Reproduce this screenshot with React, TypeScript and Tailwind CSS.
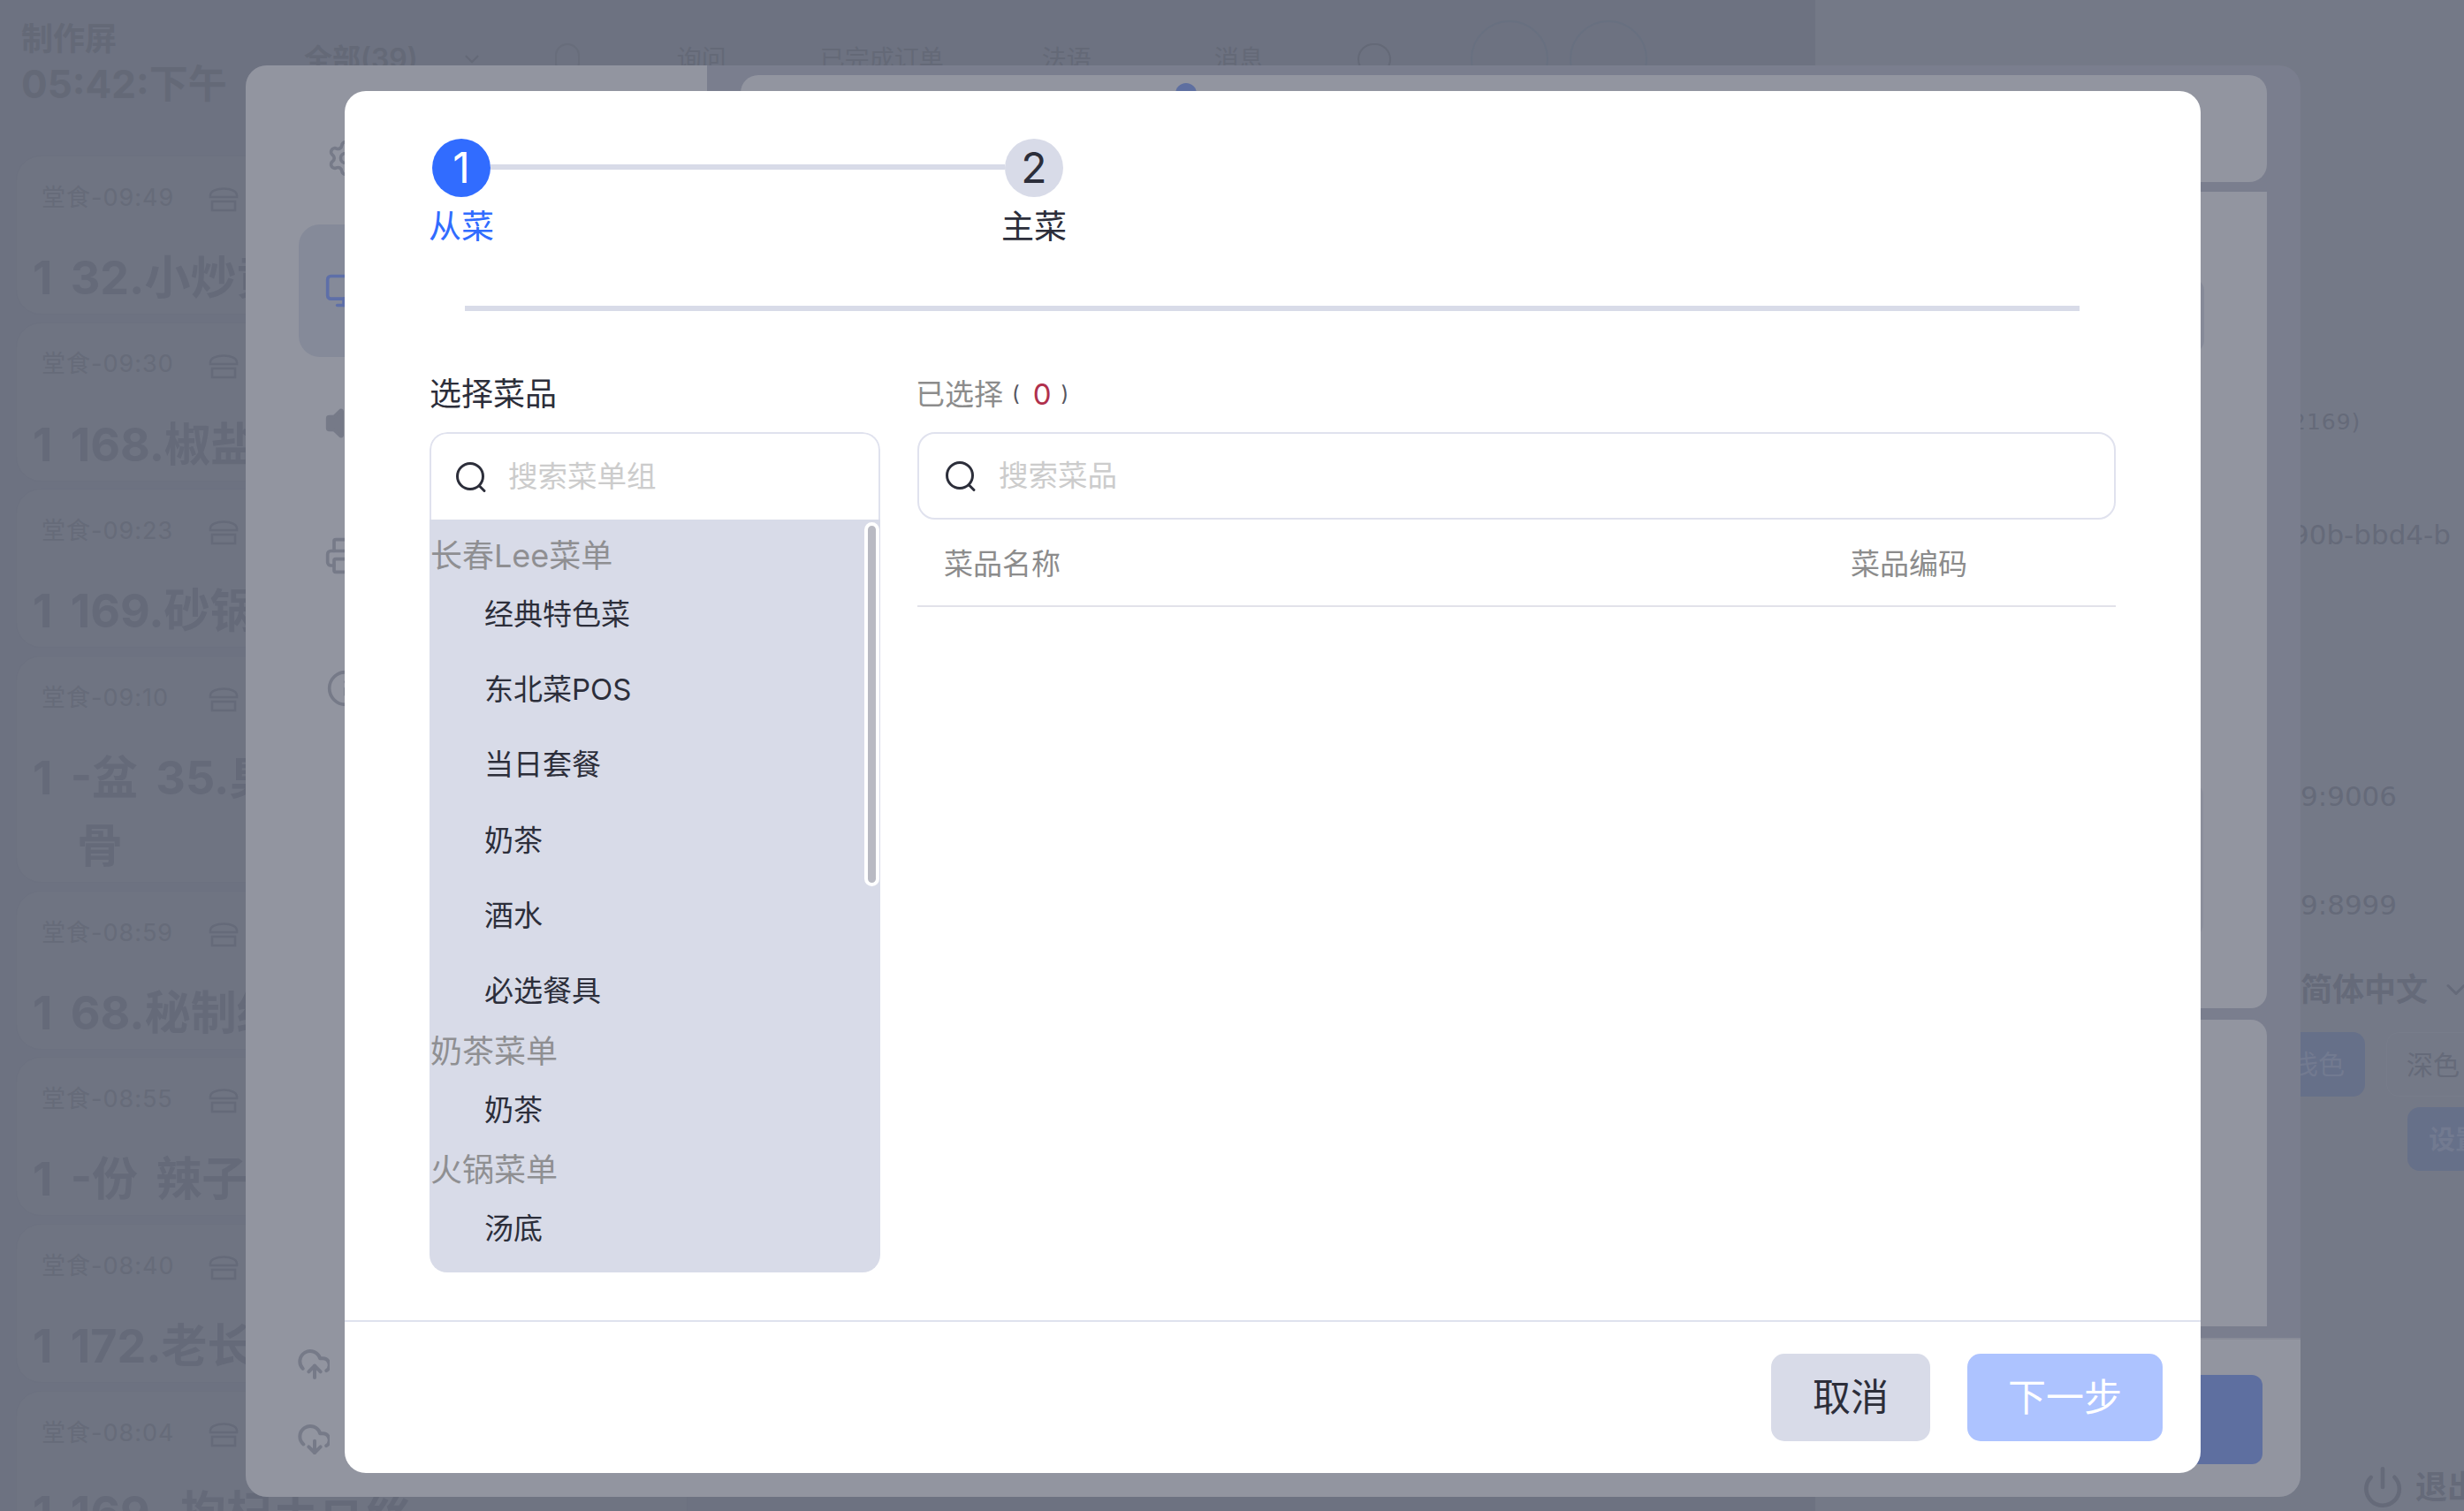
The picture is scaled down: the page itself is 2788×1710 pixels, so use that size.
import { ChevronDown, CloudDownload, CloudUpload, Info, Monitor, Power, Printer, Settings, Volume } from "lucide-react";

const orders = [
  { time: "堂食-09:49", title: ["1 32.小炒黄牛肉"] },
  { time: "堂食-09:30", title: ["1 168.椒盐排条"] },
  { time: "堂食-09:23", title: ["1 169.砂锅豆腐"] },
  { time: "堂食-09:10", title: ["1 -盆 35.臭鳜鱼排", "骨"] },
  { time: "堂食-08:59", title: ["1 68.秘制红烧肉"] },
  { time: "堂食-08:55", title: ["1 -份 辣子鸡丁"] },
  { time: "堂食-08:40", title: ["1 172.老长春酱骨"] },
  { time: "堂食-08:04", title: ["1 169. 拘杞土豆丝"] },
];

const menuGroups = [
  { name: "长春Lee菜单", items: ["经典特色菜", "东北菜POS", "当日套餐", "奶茶", "酒水", "必选餐具"] },
  { name: "奶茶菜单", items: ["奶茶"] },
  { name: "火锅菜单", items: ["汤底"] },
];

function SearchGlyph() {
  return (
    <svg width="36" height="36" viewBox="0 0 36 36" fill="none" stroke="#2c2e3a" strokeWidth="3" strokeLinecap="round" className="shrink-0">
      <circle cx="17" cy="17" r="14.5" />
      <path d="M27.5 28 L33 33.5" />
    </svg>
  );
}

function BoxGlyph() {
  return (
    <svg width="36" height="36" viewBox="0 0 36 36" fill="none" stroke="#656a79" strokeWidth="2.5" className="shrink-0">
      <path d="M3 15 C3 5 33 5 33 15 L33 17 L3 17 Z" />
      <path d="M5 22 H31 V32 H5 Z" />
    </svg>
  );
}

function Backdrop() {
  return (
    <div className="flex h-full">
      <div className="w-[2054px] shrink-0">
        <div className="flex h-[176px] items-start">
          <div className="w-[287px] shrink-0 pl-[24px] font-bold text-[#646977]">
            <div className="pt-[20px] text-[36px] leading-[48px]">制作屏</div>
            <div className="text-[44px] leading-[54px]">05:42:下午</div>
          </div>
          <div className="mt-[47px] flex h-[40px] items-center text-[28px] leading-[40px] whitespace-nowrap text-[#646977]">
            <span className="ml-[57px] text-[32px] font-semibold">全部(39)</span>
            <ChevronDown size={26} className="ml-[48px] shrink-0" />
            <span className="ml-[81px] h-[36px] w-[28px] shrink-0 rounded-full border-2 border-[#686d7b]" />
            <span className="ml-[110px]">询问</span>
            <span className="ml-[106px]">已完成订单</span>
            <span className="ml-[111px]">法语</span>
            <span className="ml-[139px]">消息</span>
            <span className="ml-[106px] h-[36px] w-[38px] shrink-0 rounded-full border-2 border-[#646977]" />
            <span className="ml-[90px] h-[88px] w-[88px] shrink-0 rounded-full border-2 border-[#687080]" />
            <span className="ml-[24px] h-[88px] w-[88px] shrink-0 rounded-full border-2 border-[#687080]" />
          </div>
        </div>
        <div className="ml-[18px] flex w-[760px] flex-col gap-[8.7px]">
          {orders.map((order) => (
            <div key={order.time} className="rounded-[28px] border border-[#6c7180] bg-[#6f7482] px-[18px] pt-[24px] pb-[2px]">
              <div className="flex h-[46px] items-center">
                <span className="w-[198px] pl-[10px] text-[27px] tracking-[1px] whitespace-nowrap text-[#666b79]">{order.time}</span>
                <BoxGlyph />
              </div>
              <div className="mt-[29px] text-[52px] leading-[77px] font-bold whitespace-nowrap text-[#656a79] [word-spacing:8px]">
                {order.title.map((line, i) => (
                  <div key={line} className={i > 0 ? "pl-[50px]" : ""}>
                    {line}
                  </div>
                ))}
              </div>
            </div>
          ))}
        </div>
      </div>

      <div className="flex h-full flex-1 flex-col overflow-hidden bg-[#747987] pl-[549px] text-[#656a79]">
        <div className="mt-[453px] -ml-[10px] h-[50px] text-[25px] leading-[50px] tracking-[1px] whitespace-nowrap" style={{ fontFamily: "'DejaVu Sans', sans-serif" }}>
          2169)
        </div>
        <div className="mt-[77px] -ml-[10px] h-[50px] text-[31px] leading-[50px] whitespace-nowrap" style={{ fontFamily: "'DejaVu Sans', sans-serif" }}>
          90b-bbd4-b
        </div>
        <div className="mt-[246px] h-[50px] text-[31px] leading-[50px]" style={{ fontFamily: "'DejaVu Sans', sans-serif" }}>
          9:9006
        </div>
        <div className="mt-[73px] h-[50px] text-[31px] leading-[50px]" style={{ fontFamily: "'DejaVu Sans', sans-serif" }}>
          9:8999
        </div>
        <div className="mt-[46px] flex h-[50px] items-center text-[36px] font-bold whitespace-nowrap">
          简体中文
          <ChevronDown size={36} className="ml-[14px] shrink-0" />
        </div>
        <div className="mt-[23px] flex text-[30px] leading-[73px]">
          <span className="-ml-[33px] h-[73px] w-[106px] shrink-0 rounded-[14px] bg-[#667089] text-center text-[#727a90]">浅色</span>
          <span className="ml-[24px] h-[73px] w-[106px] shrink-0 rounded-[14px] border border-[#777c8a] text-center">深色</span>
        </div>
        <span className="mt-[12px] ml-[121px] h-[72px] w-[106px] shrink-0 rounded-[14px] bg-[#667089] pl-[24px] text-[30px] leading-[72px] font-semibold whitespace-nowrap text-[#727a90]">
          设置
        </span>
        <div className="mt-auto ml-[68px] flex h-[54px] shrink-0 items-center text-[36px] font-bold whitespace-nowrap">
          <Power size={50} strokeWidth={2.2} className="shrink-0" />
          <span className="ml-[12px]">退出</span>
        </div>
      </div>
    </div>
  );
}

function SettingsDialog() {
  return (
    <div className="absolute top-[74px] left-[278px] flex h-[1620px] w-[2325px] overflow-hidden rounded-[24px] bg-[#7a7e8e]">
      <div className="flex w-[522px] shrink-0 flex-col bg-[#9295a0] pt-[30px] text-[#767a88]">
        <div className="flex h-[150px] items-center pl-[91px]">
          <Settings size={44} />
        </div>
        <div className="ml-[60px] flex h-[150px] w-[400px] items-center rounded-[24px] bg-[#858a99] pl-[29px] text-[#5e6fa8]">
          <Monitor size={44} />
        </div>
        <div className="flex h-[150px] items-center pl-[89px]">
          <Volume size={44} fill="currentColor" />
        </div>
        <div className="flex h-[150px] items-center pl-[89px]">
          <Printer size={44} />
        </div>
        <div className="flex h-[150px] items-center pl-[91px]">
          <Info size={44} />
        </div>
        <div className="mt-auto mb-[45px] ml-[59px] flex flex-col gap-[45px]">
          <div className="h-[40px] w-[36px] overflow-hidden">
            <CloudUpload size={40} strokeWidth={2.4} className="-ml-[1px]" />
          </div>
          <div className="h-[40px] w-[36px] overflow-hidden">
            <CloudDownload size={40} strokeWidth={2.4} className="-ml-[1px]" />
          </div>
        </div>
      </div>
      <div className="flex flex-1 flex-col">
        <div className="flex-1 px-[38px] pt-[11px]">
          <div className="h-[121px] rounded-[20px] bg-[#9295a0] pt-[9px] pl-[492px]">
            <div className="size-[24px] rounded-full bg-[#5e6fa0]" />
          </div>
          <div className="mt-[11px] flex h-[924px] flex-col rounded-b-[18px] bg-[#9295a0] pt-[98px]">
            <div className="mr-[71px] ml-auto h-[84px] w-[300px] rounded-[14px] bg-[#868a98]" />
            <div className="mt-[487px] mr-[72px] ml-auto h-[174px] w-[300px] rounded-[14px] bg-[#8b8e9b]" />
          </div>
          <div className="mt-[13px] h-[347px] rounded-t-[18px] bg-[#9295a0]" />
        </div>
        <div className="mt-[12px] flex h-[180px] justify-end border-t-2 border-[#898c98] bg-[#9295a0] pt-[40px] pr-[43px]">
          <div className="h-[101px] w-[400px] rounded-[12px] bg-[#5e6fa0]" />
        </div>
      </div>
    </div>
  );
}

function DishPanel() {
  return (
    <div className="w-[510px] shrink-0">
      <div className="text-[36px] leading-[44px] text-[#2c2e3a]">选择菜品</div>
      <div className="mt-[21px] h-[951px] overflow-hidden rounded-[20px]">
        <div className="flex h-[99px] items-center gap-[24px] rounded-t-[20px] border-x-2 border-t-2 border-[#e0e2ee] pl-[27px] text-[33.5px] text-[#cccccc]">
          <SearchGlyph />
          搜索菜单组
        </div>
        <div className="relative h-[852px] bg-[#d8dbe8] pt-[15.5px]">
          {menuGroups.map((group) => (
            <div key={group.name}>
              <div className="h-[49px] pl-[1px] text-[36px] leading-[50px] text-[#8f8f92]">{group.name}</div>
              {group.items.map((item) => (
                <div key={item} className="h-[85.4px] pl-[62px] text-[33px] leading-[85px] text-[#2c2e3a]">
                  {item}
                </div>
              ))}
            </div>
          ))}
          <div className="absolute top-[3px] right-[1px] h-[412px] w-[17px] rounded-full border-[4px] border-white bg-[#b9bac3]" />
        </div>
      </div>
    </div>
  );
}

function SelectedPanel() {
  return (
    <div className="flex-1">
      <div className="-ml-[2px] flex items-center text-[33px] leading-[44px] text-[#8c8c8c]">
        已选择
        <span className="ml-[10px] text-[24px] text-[#55565f]">(</span>
        <span className="ml-[15px] text-[#b0304c]">0</span>
        <span className="ml-[11px] text-[24px] text-[#55565f]">)</span>
      </div>
      <div className="mt-[21px] flex h-[99px] items-center gap-[25px] rounded-[20px] border-2 border-[#e0e2ee] pl-[29px] text-[33.5px] text-[#cccccc]">
        <SearchGlyph />
        搜索菜品
      </div>
      <div className="flex h-[99px] items-center border-b-2 border-[#e2e2ea] pt-[4px] text-[33px] text-[#8c8c8c]">
        <span className="w-[1056px] pl-[30px]">菜品名称</span>
        <span>菜品编码</span>
      </div>
    </div>
  );
}

function StepperDialog() {
  return (
    <div className="absolute top-[103px] left-[390px] flex h-[1564px] w-[2100px] flex-col rounded-[24px] bg-white">
      <div className="ml-[96px] flex items-start pt-[54px]">
        <div className="flex w-[72px] flex-col items-center">
          <div className="flex size-[66px] items-center justify-center rounded-full bg-[#316cff] text-[48px] text-white">1</div>
          <div className="mt-[12px] text-[37px] leading-[44px] whitespace-nowrap text-[#316cff]">从菜</div>
        </div>
        <div className="-mx-[3px] mt-[29px] h-[6px] w-[582px] bg-[#d8dbe8]" />
        <div className="flex w-[72px] flex-col items-center">
          <div className="flex size-[66px] items-center justify-center rounded-full bg-[#d8dbe8] text-[48px] text-[#2c2e3a]">2</div>
          <div className="mt-[12px] text-[37px] leading-[44px] whitespace-nowrap text-[#2c2e3a]">主菜</div>
        </div>
      </div>
      <div className="mt-[67px] ml-[136px] h-[6px] w-[1827px] bg-[#d8dbe8]" />
      <div className="mt-[72px] flex gap-[42px] pr-[96px] pl-[96px]">
        <DishPanel />
        <SelectedPanel />
      </div>
      <div className="mt-auto flex h-[173px] justify-end gap-[42px] border-t-2 border-[#dfe2ee] pt-[36px] pr-[43px] text-[43px]">
        <button className="h-[99px] w-[180px] rounded-[15px] bg-[#d8dbe8] text-[#2c2e3a]">取消</button>
        <button className="h-[99px] w-[221px] rounded-[15px] bg-[#adc3ff] text-white">下一步</button>
      </div>
    </div>
  );
}

export default function App() {
  return (
    <div
      className="relative h-[1710px] w-[2788px] overflow-hidden bg-[#6d7281]"
      style={{ fontFamily: "Inter, 'Noto Sans CJK SC', sans-serif" }}
    >
      <Backdrop />
      <SettingsDialog />
      <StepperDialog />
    </div>
  );
}
